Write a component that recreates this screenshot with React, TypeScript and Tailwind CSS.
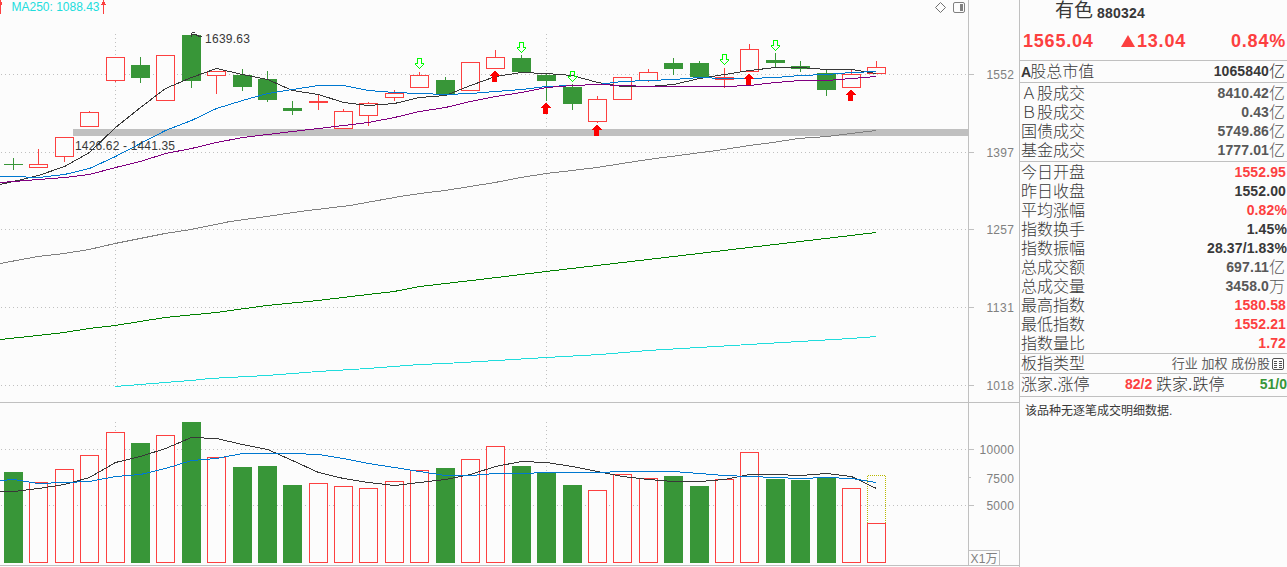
import React from "react";

type Candle = { x: number; up: boolean; top: number; bottom: number; high: number; low: number; volume: number };

// x, rising, body top, body bottom, high, low, volume bar top
const rows: [number, boolean, number, number, number, number, number][] = [
  [4, false, 164, 165, 158, 170, 472],
  [29, true, 164, 168, 149, 168, 482],
  [55, true, 137, 157, 137, 162, 469],
  [80, true, 112, 127, 111, 127, 455],
  [106, true, 57, 81, 57, 82, 432],
  [131, false, 65, 78, 57, 83, 443],
  [156, true, 55, 101, 55, 101, 435],
  [182, false, 35, 81, 35, 88, 422],
  [207, true, 71, 76, 71, 94, 457],
  [233, false, 75, 87, 69, 91, 467],
  [258, false, 79, 100, 71, 102, 466],
  [283, false, 108, 111, 101, 115, 485],
  [309, true, 101, 103, 95, 110, 483],
  [334, true, 111, 129, 109, 129, 486],
  [359, true, 103, 116, 102, 126, 488],
  [385, true, 93, 98, 90, 101, 481],
  [410, true, 75, 88, 72, 88, 470],
  [436, false, 80, 94, 77, 94, 468],
  [461, true, 62, 91, 62, 91, 459],
  [486, true, 57, 69, 50, 69, 446],
  [512, false, 58, 72, 55, 72, 466],
  [537, false, 75, 81, 74, 101, 473],
  [563, false, 87, 104, 84, 110, 485],
  [588, true, 99, 122, 96, 123, 490],
  [613, true, 77, 100, 77, 100, 474],
  [639, true, 72, 81, 69, 82, 478],
  [664, false, 63, 69, 58, 75, 476],
  [690, false, 63, 77, 61, 79, 486],
  [715, true, 77, 80, 68, 88, 479],
  [740, true, 49, 72, 44, 72, 452],
  [766, false, 60, 63, 53, 67, 479],
  [791, false, 66, 69, 61, 72, 480],
  [817, false, 73, 90, 70, 96, 477],
  [842, true, 74, 88, 70, 88, 488],
  [867, true, 67, 74, 61, 74, 523],
];
const candles: Candle[] = rows.map(([x, up, top, bottom, high, low, volume]) => ({ x, up, top, bottom, high, low, volume }));

const xs = [-0.5, ...candles.map((c) => c.x + 9)];
const line = (ys: number[]) => ys.map((y, i) => `${xs[i] + 0.5},${Math.floor(y) + 0.5}`).join(" ");

const ma5 = [184, 181, 175, 166, 152, 127, 107, 88, 77, 68, 74, 79, 90, 94, 102, 105, 103, 97, 95, 85, 76, 72, 73, 75, 82, 86, 86, 84, 78, 74, 70, 67, 67, 69, 69, 73];
const ma10 = [176, 176, 177, 174, 168, 156, 143, 130, 120, 108, 100, 93, 89, 85, 85, 90, 92, 93, 94, 93, 91, 89, 86, 85, 84, 81, 80, 79, 77, 78, 78, 77, 75, 74, 72, 71];
const ma20 = [182, 181, 179, 177, 174, 167, 161, 153, 148, 142, 137, 134, 131, 128, 125, 122, 117, 111, 107, 101, 96, 92, 87, 85, 84, 85, 86, 86, 86, 86, 85, 82, 80, 80, 78, 76];
const vol5 = [491, 491, 488, 484, 477, 462, 456, 448, 437, 438, 444, 449, 460, 472, 478, 482, 485, 482, 479, 474, 466, 461, 462, 466, 471, 476, 479, 481, 481, 479, 474, 474, 475, 473, 476, 488];
const vol10 = [480, 479, 483, 482, 481, 476, 474, 468, 460, 458, 453, 453, 453, 454, 458, 463, 467, 471, 475, 475, 473, 473, 472, 472, 472, 471, 471, 471, 473, 475, 476, 477, 478, 477, 478, 482];

const ma60 = "0,263.5 38,256.5 64,253.5 89,249.5 115,243.5 165,233.5 191,229.5 230,221.5 267,216.5 300,211.5 350,205.5 400,196.5 420,193.5 445,190.5 495,182.5 521,177.5 546,173.5 572,170.5 597,167.5 622,163.5 648,159.5 724,149.5 749,145.5 773,142.5 798,138.5 827,136.5 851,133.5 876,130.5";
const ma120 = "0,339.5 38,335.5 64,332.5 89,328.5 115,325.5 165,317.5 216,312.5 267,305.5 318,300.5 368,294.5 394,291.5 420,286.5 480,279.5 546,271.5 597,265.5 648,259.5 699,253.5 749,247.5 800,241.5 851,235.5 876,232.5";
const ma250 = "115,386.5 140,384.5 165,382.5 191,380.5 210,378.5 267,375.5 318,371.5 368,368.5 420,364.5 445,363.5 480,361.5 546,357.5 600,354.5 648,350.5 699,347.5 749,344.5 800,341.5 851,338.5 876,336.5";

const sells: [number, number][] = [[419, 58], [521, 42], [572, 71], [724, 54], [775, 40]];
const buys: [number, number][] = [[495, 71], [546, 103], [597, 125], [749, 74], [851, 90]];

const axis: [string, number, number][] = [
  ["1552", 74, 79], ["1397", 152, 157], ["1257", 229, 234], ["1131", 307, 312], ["1018", 385, 390],
  ["10000", 449, 454], ["7500", 477, 483], ["5000", 505, 510],
];

const RED = "#fc4040";
const GREEN = "#389638";

function Chart() {
  return (
    <svg width="1019" height="567" viewBox="0 0 1019 567" className="block shrink-0 font-['Liberation_Sans','Noto_Sans_CJK_SC',sans-serif] text-[12px]">
      <g shapeRendering="crispEdges" fill="none">
        <g stroke="#c0c0c0" strokeDasharray="1 3">
          {[74, 152, 229, 307, 385, 449, 505].map((y) => (
            <line key={y} x1="1" x2="968" y1={y + 0.5} y2={y + 0.5} />
          ))}
          {[115, 546].map((x) => (
            <g key={x}>
              <line x1={x + 0.5} x2={x + 0.5} y1="34" y2="388" />
              <line x1={x + 0.5} x2={x + 0.5} y1="422" y2="563" />
            </g>
          ))}
        </g>
        <rect x="73" y="129" width="895" height="7" fill="#c0c0c0" />
        <g stroke="#c0c0c0">
          <path d="M968.5 0V565M0 402.5H1019M0 565.5H1019M968 550.5H999.5V565" />
          {axis.map(([t, y]) => (
            <line key={t} x1="968" x2={t === "7500" ? 971 : 974} y1={y + 0.5} y2={y + 0.5} />
          ))}
        </g>

        {candles.map((c) => {
          const cx = c.x + 9;
          const color = c.up ? RED : GREEN;
          const solid = !c.up || c.bottom - c.top <= 3;
          return (
            <g key={c.x}>
              {c.high < c.top && <rect x={cx} y={c.high} width="1" height={c.top - c.high} fill={color} />}
              {c.low > c.bottom && <rect x={cx} y={c.bottom} width="1" height={c.low - c.bottom} fill={color} />}
              {solid ? (
                <rect x={c.x} y={c.top} width="19" height={c.bottom - c.top} fill={color} />
              ) : (
                <rect x={c.x + 0.5} y={c.top + 0.5} width="18" height={c.bottom - c.top - 1} fill="#fcfcfc" stroke={color} />
              )}
              {c.up ? (
                <rect x={c.x + 0.5} y={c.volume + 0.5} width="18" height={562 - c.volume} fill="#fcfcfc" stroke={RED} />
              ) : (
                <rect x={c.x} y={c.volume} width="19" height={563 - c.volume} fill={GREEN} />
              )}
            </g>
          );
        })}
        <path d="M867.5 523V475.5H885.5V523" stroke="#b8b800" strokeDasharray="1 1" />

        <polyline points={line(ma5)} stroke="#383838" />
        <polyline points={line(ma10)} stroke="#0078d0" />
        <polyline points={line(ma20)} stroke="#800080" />
        <polyline points={ma60} stroke="#808080" />
        <polyline points={ma120} stroke="#008000" />
        <polyline points={ma250} stroke="#20dcdc" />
        <polyline points={line(vol5)} stroke="#383838" />
        <polyline points={line(vol10)} stroke="#0078d0" />

        {sells.map(([x, y]) => (
          <path key={x} transform={`translate(${x} ${y})`} d="M-2 0H3V5H5V7H4V8H3V9H2V10H1V11H0V10H-1V9H-2V8H-3V7H-4V5H-2ZM-1 1V6H-3V7H-2V8H-1V9H0V10H1V9H2V8H3V7H4V6H2V1Z" fillRule="evenodd" fill="#00fc00" />
        ))}
        {buys.map(([x, y]) => (
          <path key={x} transform={`translate(${x} ${y})`} d="M-1 0H1V1H2V2H3V3H4V4H5V5H2V11H-3V5H-5V4H-4V3H-3V2H-2V1H-1Z" fill="#fc0000" />
        ))}

        <path d="M191.5 36.5V33.5L192.5 32.5H194.5M191.5 34.5H195.5L199.5 36.5H202" stroke="#383838" />
        <path d="M0 0H1V14H0ZM1 2H2V5H1ZM103 0H104V14H103ZM102 2H105V4H102ZM101 4H106V5H101Z" fill={RED} />
        <rect x="960" y="4" width="3" height="7" fill="#808080" />
      </g>
      <path d="M940.5 2.5L945.5 7.5L940.5 12.5L935.5 7.5Z" fill="none" stroke="#707070" />
      <rect x="953.5" y="2.5" width="11" height="10" rx="1.5" fill="none" stroke="#808080" />

      <text x="11.5" y="11" textLength="88" fill="#20dcdc">MA250: 1088.43</text>
      <text x="205" y="43" textLength="45" fill="#383838">1639.63</text>
      <text x="75" y="150" textLength="100" fill="#383838">1426.62 - 1441.35</text>
      {axis.map(([t, , y]) => (
        <text key={t} x="1014" y={y} textAnchor="end" textLength={t.length * 6.9} fill="#808080">{t}</text>
      ))}
      <text x="970.5" y="563" textLength="27" fill="#808080">X1万</text>
    </svg>
  );
}

function Row({ label, value, unit, tone = "text-[#383838]", percent }: { label: React.ReactNode; value: string; unit?: string; tone?: string; percent?: boolean }) {
  return (
    <div className={`flex h-[19px] items-center justify-between pl-px ${percent ? "" : unit ? "pr-[2px]" : "pr-px"}`}>
      <span className="text-[#383838]">{label}</span>
      <span className={`flex items-center ${tone}`}>
        <b className="text-[14px] font-bold leading-[19px] tracking-[0.12px]">{value}</b>
        {unit && <span>{unit}</span>}
      </span>
    </div>
  );
}

const red = "text-[#fc4040]";
const dim = "text-[#585858]";

export default function App() {
  return (
    <div className="flex h-[567px] w-[1287px] overflow-hidden bg-[#fcfcfc]">
      <Chart />
      <aside className="flex min-w-0 flex-1 flex-col whitespace-nowrap border-l border-[#c0c0c0] font-['Liberation_Sans','Noto_Sans_CJK_SC',sans-serif] text-[16px] font-light leading-[19px]">
        <header className="h-[60px]">
          <div className="flex h-[22px] items-center gap-1 pl-[35px] text-[#383838]">
            <span className="text-[19px] font-normal leading-[22px]">有色</span>
            <b className="pt-[5px] text-[14px] font-bold leading-[17px] tracking-[0.2px]">880324</b>
          </div>
          <div className="flex h-[38px] items-center pl-[3px] pr-px text-[18px] font-bold tracking-[0.8px] text-[#fc4040]">
            <span className="w-[98px]">1565.04</span>
            <span className="flex items-center gap-[2px]">
              <svg width="14" height="12" viewBox="0 0 14 12"><path d="M7 0L14 12H0Z" fill="#fc4040" /></svg>
              13.04
            </span>
            <span className="ml-auto">0.84%</span>
          </div>
        </header>
        <div className="flex h-[23px] flex-col justify-center border-y border-[#c0c0c0]">
          <Row label={<><b className="text-[14px] font-bold tracking-[-1px]">A</b>股总市值</>} value="1065840" unit="亿" />
        </div>
        <div className="flex h-[78px] flex-col pt-px">
          <Row label="Ａ股成交" value="8410.42" unit="亿" tone={dim} />
          <Row label="Ｂ股成交" value="0.43" unit="亿" tone={dim} />
          <Row label="国债成交" value="5749.86" unit="亿" tone={dim} />
          <Row label="基金成交" value="1777.01" unit="亿" tone={dim} />
        </div>
        <div className="flex h-[192px] flex-col border-t border-[#c0c0c0] pt-px">
          <Row label="今日开盘" value="1552.95" tone={red} />
          <Row label="昨日收盘" value="1552.00" />
          <Row label="平均涨幅" value="0.82%" tone={red} percent />
          <Row label="指数换手" value="1.45%" percent />
          <Row label="指数振幅" value="28.37/1.83%" percent />
          <Row label="总成交额" value="697.11" unit="亿" tone={dim} />
          <Row label="总成交量" value="3458.0" unit="万" tone={dim} />
          <Row label="最高指数" value="1580.58" tone={red} />
          <Row label="最低指数" value="1552.21" tone={red} />
          <Row label="指数量比" value="1.72" tone={red} />
        </div>
        <div className="flex h-[20px] items-center justify-between border-t border-[#c0c0c0] pl-px pr-[3px] text-[#383838]">
          <span>板指类型</span>
          <span className="flex items-center gap-[2px] text-[13px] font-normal text-[#606060]">
            行业 加权 成份股
            <svg width="12" height="12" viewBox="0 0 12 12" fill="none" stroke="#505050">
              <rect x=".5" y=".5" width="11" height="11" rx="1.5" />
              <path d="M2 3.5H5M2 5.5H5M2 7.5H5M2 9.5H5M7 3.5H10M7 5.5H10M7 7.5H10M7 9.5H10" shapeRendering="crispEdges" />
            </svg>
          </span>
        </div>
        <div className="flex h-[24px] items-center border-y border-[#c0c0c0] pb-[2px] pl-px text-[#383838]">
          <span className="w-[104px]">涨家.涨停</span>
          <b className="w-[31px] text-[14px] font-bold text-[#fc4040]">82/2</b>
          <span className="flex-1">跌家.跌停</span>
          <b className="text-[14px] font-bold text-[#389638]">51/0</b>
        </div>
        <p className="pl-[5px] pt-[5px] text-[12px] font-normal text-[#383838]">该品种无逐笔成交明细数据.</p>
      </aside>
    </div>
  );
}
